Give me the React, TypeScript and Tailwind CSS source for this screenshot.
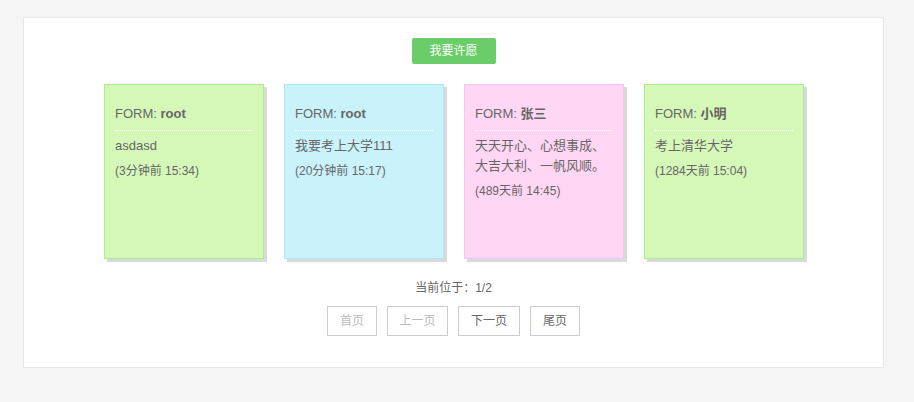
const wishes = [
  { from: 'root', text: 'asdasd', time: '(3分钟前 15:34)', card: 'bg-[#d5f8b9] border-[#a8f08e]' },
  { from: 'root', text: '我要考上大学111', time: '(20分钟前 15:17)', card: 'bg-[#c9f2fb] border-[#aee6f6]' },
  { from: '张三', text: '天天开心、心想事成、大吉大利、一帆风顺。', time: '(489天前 14:45)', card: 'bg-[#ffd6f4] border-[#f8c4ee]' },
  { from: '小明', text: '考上清华大学', time: '(1284天前 15:04)', card: 'bg-[#d5f8b9] border-[#a8f08e]' },
]

const pages = [
  { label: '首页', w: 'w-[50px]', off: true },
  { label: '上一页', w: 'w-[61px]', off: true },
  { label: '下一页', w: 'w-[62px]', off: false },
  { label: '尾页', w: 'w-[50px]', off: false },
]

export default function App() {
  return (
    <div
      className="min-h-[402px] bg-[#f5f5f5] pl-[23px] pr-[30px] pt-[17px] text-[#666]"
      style={{ fontFamily: '"Liberation Sans", Arial, "Noto Sans CJK SC", sans-serif' }}
    >
      <div className="h-[351px] border border-[#e8e8e8] bg-white">
        <div className="flex justify-center pt-[20px]">
          <button
            type="button"
            className="h-[26px] w-[84px] rounded-[2px] bg-[#6acd6a] text-[12px] text-white"
          >
            我要许愿
          </button>
        </div>

        <div className="mt-[20px] flex justify-center gap-[20px] pl-[1px]">
          {wishes.map((w, i) => (
            <div
              key={i}
              className={`h-[175px] w-[160px] border px-[10px] pt-[19px] shadow-[3px_3px_0_#d9d9d9] ${w.card}`}
            >
              <h3 className="border-b border-dotted border-white pb-[6px] text-[13px] leading-[20px]">
                FORM: <b>{w.from}</b>
              </h3>
              <p className="mt-[5px] text-[13px] leading-[20px]">{w.text}</p>
              <p className="mt-[5px] text-[12px] leading-[20px]">{w.time}</p>
            </div>
          ))}
        </div>

        <p className="mt-[21px] text-center text-[12px] leading-[16px]">当前位于：1/2</p>
        <div className="mt-[10px] flex justify-center gap-[10px]">
          {pages.map((p) => (
            <button
              key={p.label}
              type="button"
              className={`h-[30px] border border-[#ccc] bg-white text-[12px] ${p.w} ${p.off ? 'text-[#bbb]' : 'text-[#666]'}`}
            >
              {p.label}
            </button>
          ))}
        </div>
      </div>
    </div>
  )
}
